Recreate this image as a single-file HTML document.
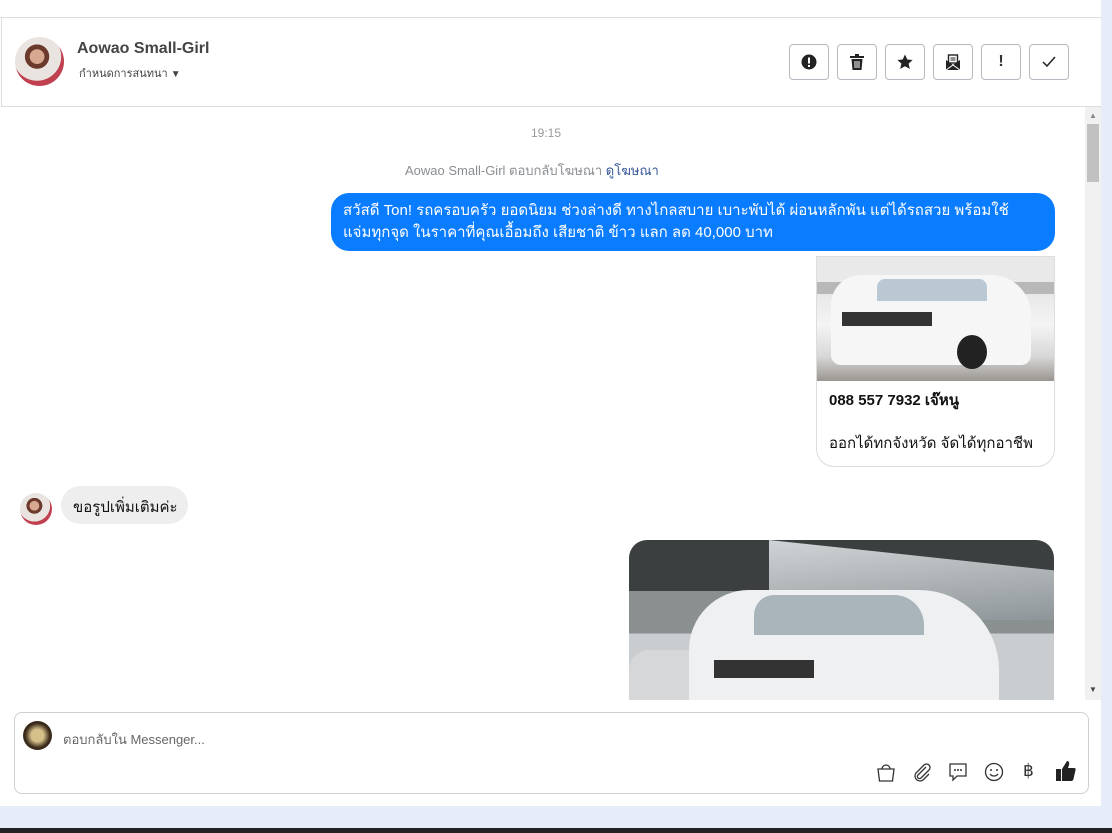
<!DOCTYPE html>
<html><head><meta charset="utf-8"><style>
*{box-sizing:border-box;margin:0;padding:0}
body{width:1112px;height:833px;overflow:hidden;background:#e6ecf8;font-family:"Liberation Sans","Noto Sans CJK SC",sans-serif;position:relative}
.panel{position:absolute;left:0;top:0;width:1101px;height:806px;background:#fff}
.top{position:absolute;left:0;top:0;width:1101px;height:18px;border-bottom:1px solid #ddd;background:#fff}
.hdr{position:absolute;left:1px;top:18px;width:1100px;height:89px;border-bottom:1px solid #ddd;border-left:1px solid #ddd}
.av{position:absolute;border-radius:50%;background:radial-gradient(circle at 45% 40%,#d9a890 0 18%,#6b3a2c 19% 30%,#e9e4e0 31% 60%,#c04050 61%)}
.btn{position:absolute;top:44px;width:40px;height:36px;border:1px solid #b5b9bf;border-radius:4px;display:flex;align-items:center;justify-content:center;color:#333}
.chat{position:absolute;left:1px;top:107px;width:1084px;height:593px;background:#fff;overflow:hidden}
.sb{position:absolute;left:1085px;top:107px;width:16px;height:593px;background:#f1f1f1}
.bubble{position:absolute;left:330px;top:86px;width:724px;height:58px;background:#0a7cff;color:#fff;border-radius:18px;padding:7px 12px;font-size:15px;line-height:22px;white-space:nowrap}
.card{position:absolute;left:815px;top:149px;width:239px;height:211px;border:1px solid #ddd;border-radius:0 0 18px 18px;overflow:hidden;background:#fff}
.input{position:absolute;left:14px;top:712px;width:1075px;height:82px;border:1px solid #ccd0d5;border-radius:8px;background:#fff}
.ic{position:absolute;top:762px}
</style></head><body>
<div class="panel"></div>
<div class="top"></div>
<div class="hdr">
 <div class="av" style="left:13px;top:19px;width:49px;height:49px"></div>
 <div style="position:absolute;left:75px;top:22px;font-size:16px;font-weight:bold;color:#444">Aowao Small-Girl</div>
 <div style="position:absolute;left:77px;top:46px;font-size:11px;color:#444">กำหนดการสนทนา <span style="font-size:10px">▼</span></div>
</div>
<div class="btn" style="left:789px"><svg width="16" height="16"><circle cx="8" cy="8" r="7.5" fill="#222"/><rect x="7" y="3.5" width="2" height="6" fill="#fff"/><rect x="7" y="11" width="2" height="2" fill="#fff"/></svg></div>
<div class="btn" style="left:837px"><svg width="14" height="16"><rect x="0" y="2" width="14" height="2" fill="#222"/><rect x="5" y="0" width="4" height="2" fill="#222"/><path d="M1.5 5h11l-1 11h-9z" fill="#222"/><path d="M5 7v7M7 7v7M9 7v7" stroke="#fff" stroke-width="1"/></svg></div>
<div class="btn" style="left:885px"><svg width="16" height="16"><path d="M8 0.5l2.3 5 5.3.5-4 3.6 1.2 5.3L8 12.2 3.2 14.9l1.2-5.3-4-3.6 5.3-.5z" fill="#222"/></svg></div>
<div class="btn" style="left:933px"><svg width="16" height="16"><path d="M1 6l7 5 7-5v10H1z" fill="#222"/><rect x="3.5" y="1" width="9" height="8" fill="#fff" stroke="#222" stroke-width="1.4"/><path d="M5.5 4h5M5.5 6h5" stroke="#222"/><path d="M1 16l7-5 7 5" stroke="#fff" fill="none"/></svg></div>
<div class="btn" style="left:981px;font-size:16px;font-weight:bold">!</div>
<div class="btn" style="left:1029px"><svg width="14" height="12"><path d="M1 6l4 4 8-9" stroke="#222" stroke-width="1.5" fill="none"/></svg></div>

<div class="chat">
 <div style="position:absolute;left:530px;top:19px;font-size:12px;color:#999">19:15</div>
 <div style="position:absolute;left:404px;top:53px;font-size:13px;color:#8a8d91">Aowao Small-Girl ตอบกลับโฆษณา <span style="color:#385898">ดูโฆษณา</span></div>
 <div class="bubble">สวัสดี Ton! รถครอบครัว ยอดนิยม ช่วงล่างดี ทางไกลสบาย เบาะพับได้ ผ่อนหลักพัน แต่ได้รถสวย พร้อมใช้<br>แจ่มทุกจุด ในราคาที่คุณเอื้อมถึง เสียชาติ ข้าว แลก ลด 40,000 บาท</div>
 <div class="card">
  <div style="height:124px;background:linear-gradient(180deg,#e9e9e9 0 20%,#b8b8b8 20% 30%,#e8e8e8 30%,#f4f4f4 55%,#d8d8d8 80%,#9a9590);position:relative">
   <div style="position:absolute;left:14px;top:18px;width:200px;height:90px;background:#f6f6f6;border-radius:30px 40px 10px 10px"></div>
   <div style="position:absolute;left:60px;top:22px;width:110px;height:22px;background:#b9c8d2;border-radius:8px 8px 0 0"></div>
   <div style="position:absolute;left:25px;top:55px;width:90px;height:14px;background:#333"></div>
   <div style="position:absolute;left:140px;top:78px;width:30px;height:34px;background:#222;border-radius:50%"></div>
  </div>
  <div style="padding:7px 12px;font-size:15px;font-weight:bold;color:#111">088 557 7932 เจ๊หนู</div>
  <div style="padding:12px 12px;font-size:15px;color:#111;white-space:nowrap">ออกได้ทกจังหวัด จัดได้ทุกอาชีพ</div>
 </div>
 <div class="av" style="left:19px;top:386px;width:32px;height:32px"></div>
 <div style="position:absolute;left:60px;top:379px;height:38px;width:127px;background:#eee;border-radius:19px;padding:9px 12px;font-size:15px;color:#111;white-space:nowrap">ขอรูปเพิ่มเติมค่ะ</div>
 <div style="position:absolute;left:628px;top:433px;width:425px;height:170px;border-radius:18px 18px 0 0;overflow:hidden;background:linear-gradient(180deg,#3b3f3f 0 30%,#8a9090 30% 55%,#c9cdd0 55%)">
  <div style="position:absolute;left:140px;top:0;width:300px;height:80px;background:linear-gradient(175deg,#d0d4d6,#8e9598);clip-path:polygon(0 0,100% 40%,100% 100%,0 100%)"></div>
  <div style="position:absolute;left:0;top:110px;width:80px;height:60px;background:#d5d7d9;border-radius:20px 20px 0 0"></div>
  <div style="position:absolute;left:60px;top:50px;width:310px;height:130px;background:#eef0f1;border-radius:60px 80px 0 0"></div>
  <div style="position:absolute;left:125px;top:55px;width:170px;height:40px;background:#aab4bb;border-radius:20px 30px 0 0"></div>
  <div style="position:absolute;left:85px;top:120px;width:100px;height:18px;background:#333"></div>
 </div>
</div>
<div class="sb"><div style="position:absolute;left:2px;top:17px;width:12px;height:58px;background:#c1c1c1"></div>
<div style="position:absolute;left:4px;top:4px;font-size:8px;color:#888">▲</div>
<div style="position:absolute;left:4px;top:578px;font-size:8px;color:#444">▼</div></div>

<div class="input">
 <div style="position:absolute;left:8px;top:8px;width:29px;height:29px;border-radius:50%;background:radial-gradient(circle,#d6c08a 0 30%,#3a2a1a 60%)"></div>
 <div style="position:absolute;left:48px;top:16px;font-size:13px;color:#666">ตอบกลับใน Messenger...</div>
</div>
<svg class="ic" style="left:876px" width="20" height="20"><path d="M2 7h16l-1.5 12h-13z M6 7a4 4 0 0 1 8 0" stroke="#333" fill="none" stroke-width="1.3"/></svg>
<svg class="ic" style="left:912px" width="20" height="20"><path d="M14 5L6 13a2 2 0 0 0 3 3l8-8a3.5 3.5 0 0 0-5-5L4 11a5 5 0 0 0 7 7l6-6" stroke="#333" fill="none" stroke-width="1.3"/></svg>
<svg class="ic" style="left:948px" width="20" height="20"><path d="M2 2h16v12H9l-4 4v-4H2z" stroke="#333" fill="none" stroke-width="1.3"/><circle cx="7" cy="8" r="1" fill="#333"/><circle cx="10" cy="8" r="1" fill="#333"/><circle cx="13" cy="8" r="1" fill="#333"/></svg>
<svg class="ic" style="left:984px" width="20" height="20"><circle cx="10" cy="10" r="8.5" stroke="#333" fill="none" stroke-width="1.3"/><circle cx="7" cy="8" r="1" fill="#333"/><circle cx="13" cy="8" r="1" fill="#333"/><path d="M6 12a5 5 0 0 0 8 0" stroke="#333" fill="none" stroke-width="1.3"/></svg>
<div style="position:absolute;left:1023px;top:761px;font-size:17px;color:#333">฿</div>
<svg class="ic" style="left:1055px;top:760px" width="22" height="22"><rect x="1" y="9" width="5" height="12" fill="#222"/><path d="M7 9l5-8c2 0 2.5 1.5 2 4l-1 3h6c1.5 0 2 1 1.5 2l-2 9c-.3 1-1 2-2 2H7z" fill="#222"/></svg>
<div style="position:absolute;left:0;top:828px;width:1112px;height:5px;background:#222"></div>
</body></html>
